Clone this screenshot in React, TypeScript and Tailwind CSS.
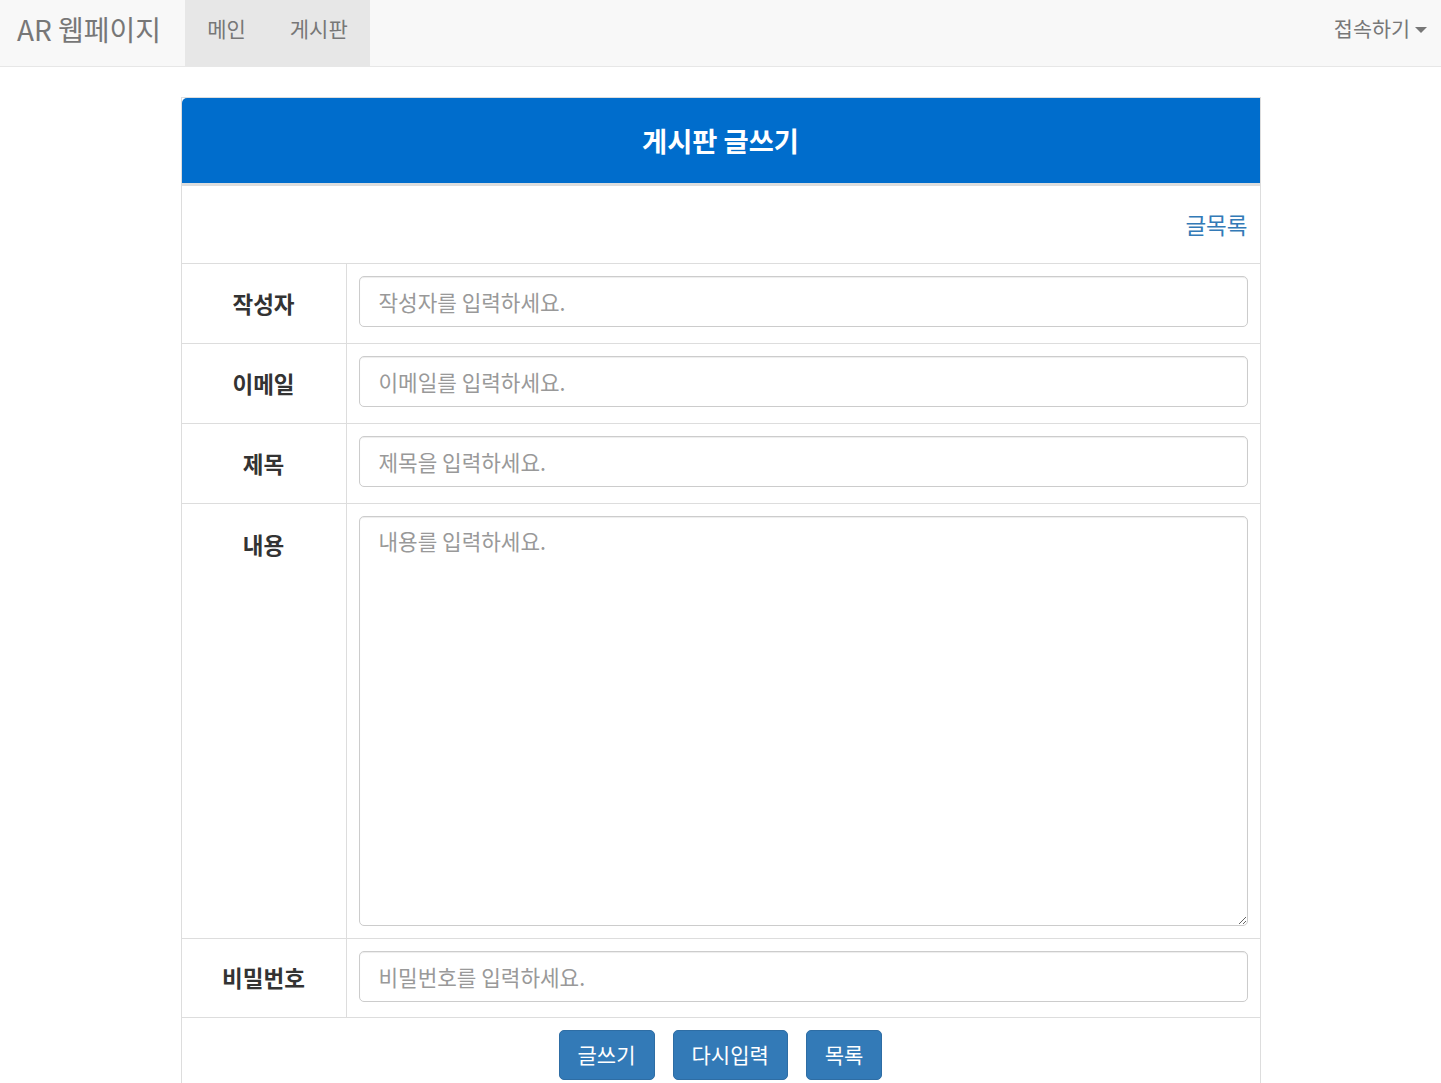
import React from 'react';

const fields = [
  { label: '작성자', placeholder: '작성자를 입력하세요.' },
  { label: '이메일', placeholder: '이메일를 입력하세요.' },
  { label: '제목', placeholder: '제목을 입력하세요.' },
];

const inputCls =
  'h-[51px] w-full rounded-[5px] border border-[#ccc] px-[19px] text-[21.3px] shadow-[inset_0_1px_1px_rgba(0,0,0,0.075)] outline-none placeholder:text-[#999]';

function Label({ children, top }: { children: React.ReactNode; top?: boolean }) {
  return (
    <div
      className={
        top
          ? 'flex w-[165px] shrink-0 justify-center border-r border-[#ddd] pt-[24px] text-[22.5px] font-bold'
          : 'flex w-[165px] shrink-0 items-center justify-center border-r border-[#ddd] text-[22.5px] font-bold'
      }
    >
      {children}
    </div>
  );
}

export default function App() {
  return (
    <div className="min-h-screen bg-white font-['Noto_Sans_CJK_KR','Noto_Sans',sans-serif] text-[#333]">
      {/* navbar */}
      <nav className="flex h-[67px] items-stretch justify-between border-b border-[#e7e7e7] bg-[#f8f8f8]">
        <div className="flex items-stretch">
          <a className="flex items-center pb-[8px] pl-[17px] pr-[24px] text-[28px] text-[#777]">AR 웹페이지</a>
          <div className="flex items-stretch bg-[#e7e7e7]">
            <a className="flex items-center px-[22px] pb-[8px] text-[21px] text-[#777]">메인</a>
            <a className="flex items-center px-[22px] pb-[8px] text-[21px] text-[#777]">게시판</a>
          </div>
        </div>
        <a className="flex items-center gap-[5px] pb-[8px] pr-[14px] text-[20.7px] text-[#777]">
          접속하기
          <span className="mt-[2px] h-0 w-0 border-x-[6px] border-t-[6px] border-x-transparent border-t-[#777]" />
        </a>
      </nav>

      <div className="mx-auto mt-[30px] w-[1080px] border border-b-0 border-[#ddd]">
        <div className="flex h-[85px] items-center justify-center rounded-tl-[5px] bg-[#006dcc] text-[27.3px] font-bold text-white">
          게시판 글쓰기
        </div>
        <div className="h-[3px] bg-[#ddd]" />

        <div className="flex h-[78px] items-center justify-end border-b border-[#ddd] pr-[12px]">
          <a className="text-[22.5px] text-[#337ab7]">글목록</a>
        </div>

        {fields.map((f) => (
          <div key={f.label} className="flex h-[80px] border-b border-[#ddd]">
            <Label>{f.label}</Label>
            <div className="flex-1 px-[12px] pt-[12px]">
              <input className={inputCls} placeholder={f.placeholder} />
            </div>
          </div>
        ))}

        <div className="flex h-[435px] border-b border-[#ddd]">
          <Label top>내용</Label>
          <div className="flex-1 px-[12px] pt-[12px]">
            <textarea
              className="block h-[410px] w-full rounded-[5px] border border-[#ccc] px-[19px] py-[8px] text-[21.3px] shadow-[inset_0_1px_1px_rgba(0,0,0,0.075)] outline-none placeholder:text-[#999]"
              placeholder="내용를 입력하세요."
            />
          </div>
        </div>

        <div className="flex h-[79px] border-b border-[#ddd]">
          <Label>비밀번호</Label>
          <div className="flex-1 px-[12px] pt-[12px]">
            <input className={inputCls} placeholder="비밀번호를 입력하세요." />
          </div>
        </div>

        <div className="flex justify-center gap-[18px] pb-[10px] pt-[12px]">
          {['글쓰기', '다시입력', '목록'].map((b) => (
            <button
              key={b}
              className="h-[50px] rounded-[5px] border border-[#2e6da4] bg-[#337ab7] px-[18px] text-[21px] text-white"
            >
              {b}
            </button>
          ))}
        </div>
      </div>
    </div>
  );
}
